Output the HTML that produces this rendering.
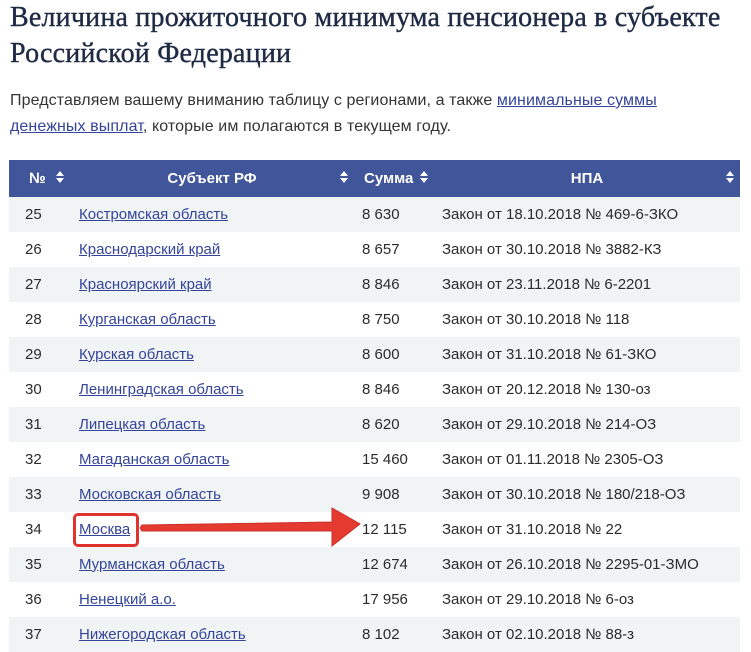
<!DOCTYPE html>
<html><head><meta charset="utf-8">
<style>
body{margin:0;background:#fff;width:751px;height:635px;overflow:hidden;font-family:"Liberation Sans",sans-serif;color:#2b2b2b}
h1{position:absolute;left:10px;top:0;margin:0;font-family:"Liberation Serif",serif;font-weight:normal;font-size:28px;letter-spacing:0.2px;line-height:36px;color:#1f2a44;width:745px;-webkit-text-stroke:0.4px #1f2a44}
p{position:absolute;left:10px;top:88px;margin:0;font-size:16px;line-height:26px;width:690px;color:#333;letter-spacing:0.1px}
a{color:#34449a;text-decoration:underline}
table{position:absolute;left:9px;top:160px;width:731px;border-collapse:collapse;font-size:15px}
th{background:#41559a;color:#fff;height:35px;font-weight:bold;font-size:15px;position:relative}
td{height:35px;padding:0}
tr:nth-child(even) td{background:#f1f4f5}
.s{position:absolute;top:11px;width:8px;height:13px}
.s:before{content:"";position:absolute;left:0;top:0;border-left:4px solid transparent;border-right:4px solid transparent;border-bottom:5px solid #fff}
.s:after{content:"";position:absolute;left:0;top:7px;border-left:4px solid transparent;border-right:4px solid transparent;border-top:5px solid #fff}
</style></head><body>
<h1>Величина прожиточного минимума пенсионера в субъекте Российской Федерации</h1>
<p>Представляем вашему вниманию таблицу с регионами, а также <a>минимальные суммы денежных выплат</a>, которые им полагаются в текущем году.</p>
<table>
<colgroup><col style="width:61px"><col style="width:284px"><col style="width:80px"><col></colgroup>
<tr><th style="text-align:left;padding-left:20px">№<span class="s" style="left:47px"></span></th><th>Субъект РФ<span class="s" style="left:270px"></span></th><th style="text-align:left;padding-left:10px">Сумма<span class="s" style="left:66px"></span></th><th>НПА<span class="s" style="right:6px"></span></th></tr>
<tr><td style="padding-left:16px">25</td><td style="padding-left:9px"><a>Костромская область</a></td><td style="padding-left:8px">8 630</td><td style="padding-left:8px">Закон от 18.10.2018 № 469-6-ЗКО</td></tr>
<tr><td style="padding-left:16px">26</td><td style="padding-left:9px"><a>Краснодарский край</a></td><td style="padding-left:8px">8 657</td><td style="padding-left:8px">Закон от 30.10.2018 № 3882-КЗ</td></tr>
<tr><td style="padding-left:16px">27</td><td style="padding-left:9px"><a>Красноярский край</a></td><td style="padding-left:8px">8 846</td><td style="padding-left:8px">Закон от 23.11.2018 № 6-2201</td></tr>
<tr><td style="padding-left:16px">28</td><td style="padding-left:9px"><a>Курганская область</a></td><td style="padding-left:8px">8 750</td><td style="padding-left:8px">Закон от 30.10.2018 № 118</td></tr>
<tr><td style="padding-left:16px">29</td><td style="padding-left:9px"><a>Курская область</a></td><td style="padding-left:8px">8 600</td><td style="padding-left:8px">Закон от 31.10.2018 № 61-ЗКО</td></tr>
<tr><td style="padding-left:16px">30</td><td style="padding-left:9px"><a>Ленинградская область</a></td><td style="padding-left:8px">8 846</td><td style="padding-left:8px">Закон от 20.12.2018 № 130-оз</td></tr>
<tr><td style="padding-left:16px">31</td><td style="padding-left:9px"><a>Липецкая область</a></td><td style="padding-left:8px">8 620</td><td style="padding-left:8px">Закон от 29.10.2018 № 214-ОЗ</td></tr>
<tr><td style="padding-left:16px">32</td><td style="padding-left:9px"><a>Магаданская область</a></td><td style="padding-left:8px">15 460</td><td style="padding-left:8px">Закон от 01.11.2018 № 2305-ОЗ</td></tr>
<tr><td style="padding-left:16px">33</td><td style="padding-left:9px"><a>Московская область</a></td><td style="padding-left:8px">9 908</td><td style="padding-left:8px">Закон от 30.10.2018 № 180/218-ОЗ</td></tr>
<tr><td style="padding-left:16px">34</td><td style="padding-left:9px"><a>Москва</a></td><td style="padding-left:8px">12 115</td><td style="padding-left:8px">Закон от 31.10.2018 № 22</td></tr>
<tr><td style="padding-left:16px">35</td><td style="padding-left:9px"><a>Мурманская область</a></td><td style="padding-left:8px">12 674</td><td style="padding-left:8px">Закон от 26.10.2018 № 2295-01-ЗМО</td></tr>
<tr><td style="padding-left:16px">36</td><td style="padding-left:9px"><a>Ненецкий а.о.</a></td><td style="padding-left:8px">17 956</td><td style="padding-left:8px">Закон от 29.10.2018 № 6-оз</td></tr>
<tr><td style="padding-left:16px">37</td><td style="padding-left:9px"><a>Нижегородская область</a></td><td style="padding-left:8px">8 102</td><td style="padding-left:8px">Закон от 02.10.2018 № 88-з</td></tr>
</table>
<div style="position:absolute;left:73px;top:513px;width:60px;height:28px;border:3px solid #e0332e;border-radius:5px"></div>
<svg style="position:absolute;left:138px;top:503px" width="225" height="48"><path d="M4 22 L194 19 L194 5 L222 21 L194 43 L194 28 L4 28 Q1 25 4 22 Z" fill="#e53a30" stroke="#c9302a" stroke-width="1"/></svg>
</body></html>
